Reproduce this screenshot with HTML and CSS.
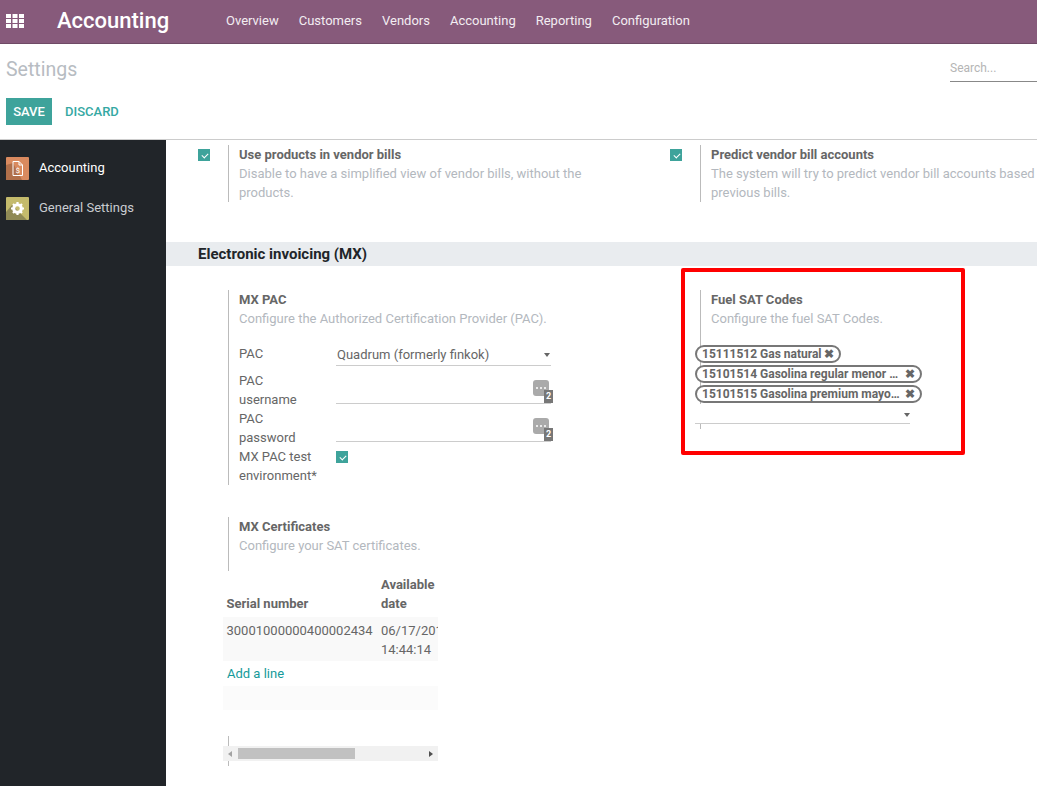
FILE: index.html
```html
<!DOCTYPE html>
<html lang="en">
<head>
    <meta charset="UTF-8">
    <title>Settings - Accounting</title>
    <link rel="stylesheet" href="styles.css">
</head>
<body>
    <nav class="navbar">
        <svg class="apps" width="18" height="14" viewBox="0 0 18 14"><g fill="#fff">
            <rect x="0" y="0" width="5" height="4"/><rect x="6.500" y="0" width="5" height="4"/><rect x="13" y="0" width="5" height="4"/>
            <rect x="0" y="5" width="5" height="4"/><rect x="6.500" y="5" width="5" height="4"/><rect x="13" y="5" width="5" height="4"/>
            <rect x="0" y="10" width="5" height="4"/><rect x="6.500" y="10" width="5" height="4"/><rect x="13" y="10" width="5" height="4"/>
        </g></svg>
        <span class="brand">Accounting</span>
        <ul class="menu">
            <li>Overview</li><li>Customers</li><li>Vendors</li><li>Accounting</li><li>Reporting</li><li>Configuration</li>
        </ul>
    </nav>
    <header class="control">
        <div class="control-top">
            <h1>Settings</h1>
            <div class="search">Search...</div>
        </div>
        <div class="buttons">
            <button class="btn-save">SAVE</button>
            <button class="btn-discard">DISCARD</button>
        </div>
    </header>
    <div class="main">
        <aside class="side">
            <div class="side-item active">
                <svg class="side-icon" width="23" height="23" viewBox="0 0 23 23">
                    <rect width="23" height="23" rx="1" fill="#d98a5f"/>
                    <path d="M0 23V8l7-2 9 17z" fill="#b06f4a"/>
                    <path d="M7 4.500h6l3.500 3.500v10.500h-9.500z" fill="none" stroke="#fff" stroke-width="1"/>
                    <path d="M13 4.500v3.500h3.500" fill="none" stroke="#fff" stroke-width="1"/>
                    <text x="11.700" y="15.500" font-size="8" fill="#fff" text-anchor="middle" font-family="Roboto">$</text>
                </svg>
                <span>Accounting</span>
            </div>
            <div class="side-item">
                <svg class="side-icon" width="23" height="23" viewBox="0 0 23 23">
                    <rect width="23" height="23" rx="1" fill="#c4bb6c"/>
                    <path d="M0 23V15l6-7 15 15z" fill="#8f8a55"/>
                    <circle cx="11.500" cy="11.500" r="3.800" fill="none" stroke="#fff" stroke-width="3"/>
                    <path d="M11.500 5v13M5 11.500h13M7 7l9 9M16 7l-9 9" stroke="#fff" stroke-width="2.200" stroke-dasharray="2.400 8.200 2.400"/>
                </svg>
                <span>General Settings</span>
            </div>
        </aside>
        <section class="content">
            <div class="row row-first">
                <div class="box">
                    <div class="box-left"><span class="check"></span></div>
                    <div class="box-right">
                        <div class="label">Use products in vendor bills</div>
                        <div class="muted">Disable to have a simplified view of vendor bills, without the products.</div>
                    </div>
                </div>
                <div class="box">
                    <div class="box-left"><span class="check"></span></div>
                    <div class="box-right">
                        <div class="label">Predict vendor bill accounts</div>
                        <div class="muted">The system will try to predict vendor bill accounts based on previous bills.</div>
                    </div>
                </div>
            </div>
            <h2 class="band">Electronic invoicing (MX)</h2>
            <div class="row row-mx">
                <div class="col-left">
                    <div class="box">
                        <div class="box-left"></div>
                        <div class="box-right">
                            <div class="label">MX PAC</div>
                            <div class="muted">Configure the Authorized Certification Provider (PAC).</div>
                            <div class="fields">
                                <div class="field-name">PAC</div>
                                <div class="input select">Quadrum (formerly finkok)<i class="caret"></i></div>
                                <div class="field-name">PAC username</div>
                                <div class="input tall"><span class="dots"><b></b><em>2</em></span></div>
                                <div class="field-name">PAC password</div>
                                <div class="input tall"><span class="dots"><b></b><em>2</em></span></div>
                                <div class="field-name">MX PAC test environment*</div>
                                <div><span class="check check-field"></span></div>
                            </div>
                        </div>
                    </div>
                    <div class="box box-cert">
                        <div class="box-left"></div>
                        <div class="box-right">
                            <div class="label">MX Certificates</div>
                            <div class="muted">Configure your SAT certificates.</div>
                        </div>
                    </div>
                    <div class="cert-wrap">
                        <div class="cert-clip">
                            <table class="cert">
                                <thead>
                                    <tr><th>Serial number</th><th class="th-date">Available date</th></tr>
                                </thead>
                                <tbody>
                                    <tr class="shaded"><td>30001000000400002434</td><td class="td-date">06/17/2016<br>14:44:14</td></tr>
                                </tbody>
                            </table>
                            <div class="add-line">Add a line</div>
                            <div class="empty-row"></div>
                        </div>
                        <div class="tick"></div>
                        <div class="scrollbar">
                            <span class="arrow-left"></span>
                            <span class="thumb"></span>
                            <span class="arrow-right"></span>
                        </div>
                        <div class="tick tick-short"></div>
                    </div>
                </div>
                <div class="col-right">
                    <div class="box box-fuel">
                        <div class="box-left"></div>
                        <div class="box-right">
                            <div class="label">Fuel SAT Codes</div>
                            <div class="muted">Configure the fuel SAT Codes.</div>
                        </div>
                    </div>
                    <div class="tags">
                        <span class="tag"><span class="tag-text">15111512 Gas natural</span><i class="tag-x">✖</i></span>
                        <span class="tag tag-wide"><span class="tag-text">15101514 Gasolina regular menor a 91 octanos</span><i class="tag-x">✖</i></span>
                        <span class="tag tag-wide"><span class="tag-text">15101515 Gasolina premium mayor o igual a 91 octanos</span><i class="tag-x">✖</i></span>
                        <div class="tag-input"><i class="caret"></i></div>
                    </div>
                    <div class="tick tick-fuel"></div>
                    <div class="highlight"></div>
                </div>
            </div>
        </section>
    </div>
</body>
</html>
```

FILE: styles.css
```css
* {
    box-sizing: border-box;
}
html, body {
    height: 100%;
}
body {
    margin: 0;
    font-family: Roboto, "Noto Sans", sans-serif;
    font-size: 13px;
    line-height: 19px;
    color: #666;
    background: #fff;
    display: flex;
    flex-direction: column;
    overflow: hidden;
}

/* top bar */
.navbar {
    height: 44px;
    flex: none;
    background: #875a7b;
    border-bottom: 1px solid #6f4a66;
    display: flex;
    align-items: center;
    color: #fff;
    padding: 0 0 2px 6px;
}
.apps {
    flex: none;
}
.brand {
    font-size: 22px;
    font-weight: 500;
    margin-left: 33px;
    width: 169px;
}
.menu {
    list-style: none;
    display: flex;
    gap: 20px;
    margin: 0;
    padding: 0;
    font-size: 13px;
    color: #f3edf2;
}

/* control panel */
.control {
    height: 96px;
    flex: none;
    border-bottom: 1px solid #ccc;
    padding: 0 0 0 6px;
}
.control-top {
    display: flex;
    justify-content: space-between;
    height: 54px;
    padding-top: 12px;
}
.control h1 {
    margin: 0;
    font-size: 19.500px;
    line-height: 28px;
    font-weight: 400;
    color: #b7bcc2;
}
.search {
    width: 87px;
    height: 26px;
    border-bottom: 1px solid #888;
    color: #b5b5b5;
    font-size: 12px;
    line-height: 24px;
}
.buttons {
    display: flex;
    align-items: center;
}
.buttons button {
    border: 0;
    height: 27px;
    font: 500 13px Roboto, sans-serif;
    padding: 0;
}
.btn-save {
    width: 46px;
    background: #3ea39b;
    color: #fff;
}
.btn-discard {
    margin-left: 13px;
    background: none;
    color: #36a8a3;
}

/* body of the page */
.main {
    flex: 1;
    display: flex;
    min-height: 0;
}
.side {
    width: 166px;
    flex: none;
    background: #212529;
    padding-top: 17px;
    color: #c9ccd0;
}
.side-item {
    display: flex;
    align-items: center;
    gap: 10px;
    height: 23px;
    margin: 0 0 17px 6px;
}
.side-item span {
    padding-bottom: 2px;
}
.side-item.active {
    color: #fff;
}
.side-icon {
    flex: none;
}
.content {
    flex: 1;
    min-width: 0;
    overflow: hidden;
}

.row {
    display: flex;
}
.row-first {
    height: 102px;
    padding-top: 5px;
}
.row-first .box {
    width: 472px;
    flex: none;
}
.row-mx {
    padding-top: 24px;
}
.col-left {
    width: 472px;
    flex: none;
}
.col-right {
    flex: 1;
    position: relative;
}
.box {
    display: flex;
}
.box-left {
    width: 62px;
    flex: none;
    padding: 4px 0 0 32px;
}
.box-right {
    border-left: 1px solid #bbb;
    padding-left: 10px;
    width: 384px;
    flex: none;
}
.label {
    font-weight: 700;
    color: #666;
}
.muted {
    color: #b3b8be;
}
.row-first .box-right {
    height: 57px;
    width: 396px;
}
.row-first .box:last-child .box-right {
    width: 360px;
}

.check {
    display: block;
    width: 12px;
    height: 12px;
    background: #3ea39b;
    position: relative;
}
.check::after {
    content: "";
    position: absolute;
    left: 3.500px;
    top: 3.500px;
    width: 5px;
    height: 3px;
    border-left: 1.500px solid #fff;
    border-bottom: 1.500px solid #fff;
    transform: rotate(-45deg);
}

.band {
    margin: 0;
    height: 24px;
    background: #e9ecef;
    font-size: 15px;
    line-height: 25px;
    font-weight: 700;
    color: #212529;
    padding-left: 32px;
}

/* PAC form */
.fields {
    display: grid;
    grid-template-columns: 97px 215px;
    margin-top: 17px;
}
.field-name {
    padding-right: 20px;
    color: #666;
}
.field-name:first-child {
    margin-top: -1px;
}
.input {
    border-bottom: 1px solid #ccc;
    position: relative;
}
.select {
    height: 21px;
    padding-left: 1px;
    margin-bottom: 5px;
    color: #666;
}
.tall {
    height: 33px;
    margin-bottom: 5px;
}
.caret {
    position: absolute;
    right: 1px;
    top: 8px;
    border: 3px solid transparent;
    border-top: 4px solid #666;
    border-bottom: 0;
}
.dots {
    position: absolute;
    right: 2px;
    top: 9px;
    width: 16px;
    height: 16px;
    border-radius: 3px;
    background: #aaa;
}
.dots b {
    position: absolute;
    left: 7px;
    top: 7px;
    width: 2px;
    height: 2px;
    border-radius: 1px;
    background: #fff;
    box-shadow: -4px 0 #fff, 4px 0 #fff;
}
.dots em {
    position: absolute;
    right: -4px;
    bottom: -7px;
    width: 9px;
    height: 13px;
    background: #777;
    color: #fff;
    text-align: center;
    font: 700 9px/13px Roboto, sans-serif;
}
.check-field {
    margin-top: 4px;
}

/* certificates */
.box-cert {
    margin-top: 32px;
}
.box-cert .box-right {
    height: 54px;
}
.cert-wrap {
    margin-left: 57px;
    width: 215px;
}
.cert-clip {
    width: 215px;
    overflow: hidden;
    height: 139px;
}
.cert {
    border-collapse: collapse;
    width: 215px;
    table-layout: fixed;
}
.cert th {
    font-weight: 700;
    text-align: left;
    vertical-align: bottom;
    padding: 4px;
}
.cert td {
    vertical-align: top;
    padding: 4px 4px 2px 4px;
    white-space: nowrap;
    overflow: hidden;
}
.cert th:first-child {
    width: 154px;
    padding-left: 3.500px;
}
.cert td:first-child {
    padding-left: 3.500px;
}
.shaded {
    background: #f9f9f9;
}
.add-line {
    color: #159a9a;
    padding: 3px 4px;
    height: 25px;
}
.empty-row {
    height: 24px;
    background: #fbfbfb;
}
.tick {
    width: 1px;
    height: 10px;
    margin: 26px 0 0 5px;
    background: #bbb;
}
.tick-short {
    margin-top: 0;
    height: 5px;
}
.scrollbar {
    height: 15px;
    background: #f1f1f1;
    display: flex;
    align-items: center;
    position: relative;
}
.thumb {
    position: absolute;
    left: 15px;
    top: 2px;
    width: 117px;
    height: 11px;
    background: #c1c1c1;
}
.arrow-left {
    position: absolute;
    left: 5px;
    border: 3px solid transparent;
    border-right: 4px solid #a3a3a3;
    border-left: 0;
}
.arrow-right {
    position: absolute;
    right: 5px;
    border: 3px solid transparent;
    border-left: 4px solid #505050;
    border-right: 0;
}

/* fuel codes */
.box-fuel .box-right {
    height: 114px;
    width: 320px;
}
.tags {
    position: absolute;
    left: 57px;
    top: 55px;
    width: 215px;
    font-weight: 700;
    font-size: 12px;
}
.tag {
    display: flex;
    align-items: center;
    width: max-content;
    height: 18px;
    margin-bottom: 2px;
    background: #fff;
    border: 2px solid #777;
    border-radius: 9px;
    padding: 0 5px;
    line-height: 14px;
    color: #666;
}
.tag-wide {
    width: 227px;
}
.tag-text {
    flex: 1;
    white-space: nowrap;
    overflow: hidden;
    text-overflow: ellipsis;
    min-width: 0;
}
.tag-x {
    flex: none;
    font-style: normal;
    font-size: 12px;
    margin-left: 2px;
    width: 10px;
    text-align: center;
    color: #666;
}
.tag-input {
    width: 215px;
    height: 20px;
    border-bottom: 1px solid #ccc;
    position: relative;
    margin-top: -1px;
}
.tag-input .caret {
    right: 0;
    top: 9px;
}
.tick-fuel {
    position: absolute;
    left: 62px;
    top: 134px;
    height: 5px;
    margin: 0;
}
.highlight {
    position: absolute;
    left: 43px;
    top: -22px;
    width: 284px;
    height: 187px;
    border: 4px solid #f00;
    border-radius: 2px;
    pointer-events: none;
}
```
